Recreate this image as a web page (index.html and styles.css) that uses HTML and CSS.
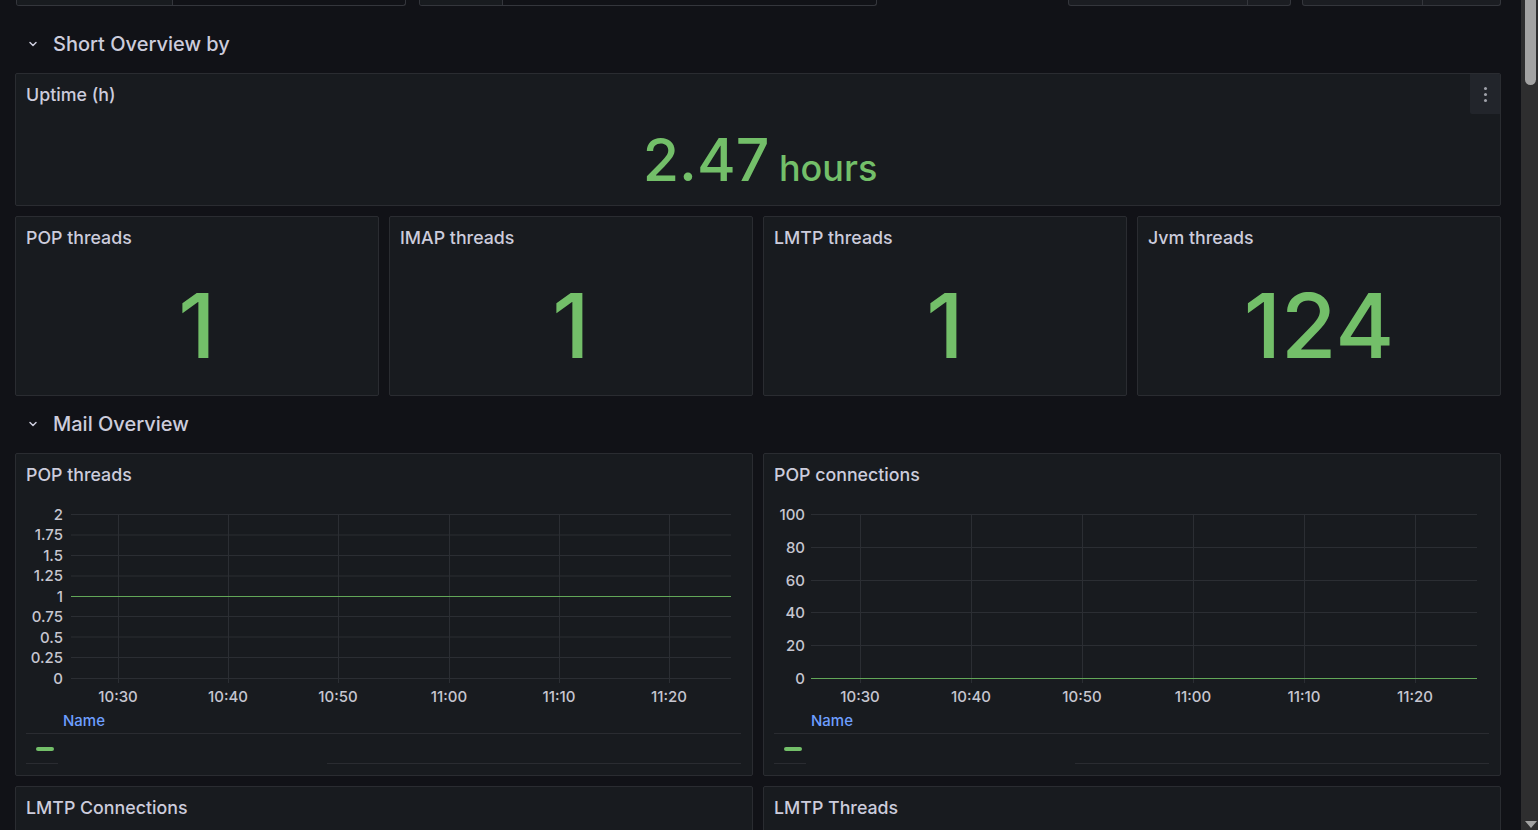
FILE: index.html
```html
<!DOCTYPE html>
<html lang="en">
<head>
<meta charset="utf-8">
<title>Dashboard</title>
<link rel="stylesheet" href="styles.css">
</head>
<body>
<div class="app">
  <main class="dash">
    <div class="toolbar">
      <div class="ctl c1"><span class="seg s1"></span><span class="seg"></span></div>
      <div class="ctl c2"><span class="seg s2"></span><span class="seg"></span></div>
      <div class="ctl c3"><span class="seg s3"></span><span class="seg"></span></div>
      <div class="ctl c4"><span class="seg s4"></span><span class="seg"></span></div>
    </div>

    <div class="row-head first">
      <svg class="chev" width="10" height="10" viewBox="0 0 10 10"><polyline points="2,3.5 5,6.5 8,3.5" fill="none" stroke="#ccccdc" stroke-width="1.5" stroke-linecap="round" stroke-linejoin="round"/></svg>
      <span class="row-title">Short Overview by</span>
    </div>

    <section class="panel uptime">
      <header class="ph">
        <h2 class="pt">Uptime (h)</h2>
        <button class="menu" aria-label="Menu"><i></i><i></i><i></i></button>
      </header>
      <div class="stat-body"><div class="val small">2.47<span class="unit"> hours</span></div></div>
    </section>

    <div class="stats">
      <section class="panel stat">
        <header class="ph"><h2 class="pt">POP threads</h2></header>
        <div class="stat-body"><div class="val big">1</div></div>
      </section>
      <section class="panel stat">
        <header class="ph"><h2 class="pt">IMAP threads</h2></header>
        <div class="stat-body"><div class="val big">1</div></div>
      </section>
      <section class="panel stat">
        <header class="ph"><h2 class="pt">LMTP threads</h2></header>
        <div class="stat-body"><div class="val big">1</div></div>
      </section>
      <section class="panel stat">
        <header class="ph"><h2 class="pt">Jvm threads</h2></header>
        <div class="stat-body"><div class="val big">124</div></div>
      </section>
    </div>

    <div class="row-head">
      <svg class="chev" width="10" height="10" viewBox="0 0 10 10"><polyline points="2,3.5 5,6.5 8,3.5" fill="none" stroke="#ccccdc" stroke-width="1.5" stroke-linecap="round" stroke-linejoin="round"/></svg>
      <span class="row-title">Mail Overview</span>
    </div>

    <div class="charts">
      <section class="panel chart">
        <header class="ph"><h2 class="pt">POP threads</h2></header>
        <svg class="plot" width="736" height="214" viewBox="0 0 736 214">
          <g class="grid-h">
            <line x1="55" x2="715" y1="20.5" y2="20.5"/>
            <line x1="55" x2="715" y1="41" y2="41"/>
            <line x1="55" x2="715" y1="61.5" y2="61.5"/>
            <line x1="55" x2="715" y1="82" y2="82"/>
            <line x1="55" x2="715" y1="122.5" y2="122.5"/>
            <line x1="55" x2="715" y1="143" y2="143"/>
            <line x1="55" x2="715" y1="163.5" y2="163.5"/>
            <line x1="55" x2="715" y1="184.5" y2="184.5"/>
          </g>
          <g class="grid-v">
            <line x1="102.5" x2="102.5" y1="20" y2="189"/>
            <line x1="212.5" x2="212.5" y1="20" y2="189"/>
            <line x1="322.5" x2="322.5" y1="20" y2="189"/>
            <line x1="433.5" x2="433.5" y1="20" y2="189"/>
            <line x1="543.5" x2="543.5" y1="20" y2="189"/>
            <line x1="653.5" x2="653.5" y1="20" y2="189"/>
          </g>
          <line class="series" x1="55" x2="715" y1="102.5" y2="102.5" stroke="#62a758" stroke-width="1"/>
          <g class="ylab">
            <text x="47" y="20">2</text>
            <text x="47" y="40.5">1.75</text>
            <text x="47" y="61">1.5</text>
            <text x="47" y="81.5">1.25</text>
            <text x="47" y="102">1</text>
            <text x="47" y="122.5">0.75</text>
            <text x="47" y="143">0.5</text>
            <text x="47" y="163.5">0.25</text>
            <text x="47" y="184">0</text>
          </g>
          <g class="xlab">
            <text x="102" y="202">10:30</text>
            <text x="212" y="202">10:40</text>
            <text x="322" y="202">10:50</text>
            <text x="433" y="202">11:00</text>
            <text x="543" y="202">11:10</text>
            <text x="653" y="202">11:20</text>
          </g>
        </svg>
        <div class="legend">
          <div class="lg-head">Name</div>
          <div class="lg-row"><span class="dash-mark"></span></div>
        </div>
      </section>

      <section class="panel chart">
        <header class="ph"><h2 class="pt">POP connections</h2></header>
        <svg class="plot" width="736" height="214" viewBox="0 0 736 214">
          <g class="grid-h">
            <line x1="47" x2="713" y1="20.5" y2="20.5"/>
            <line x1="47" x2="713" y1="53.5" y2="53.5"/>
            <line x1="47" x2="713" y1="86.5" y2="86.5"/>
            <line x1="47" x2="713" y1="118.5" y2="118.5"/>
            <line x1="47" x2="713" y1="151.5" y2="151.5"/>
          </g>
          <g class="grid-v">
            <line x1="96.5" x2="96.5" y1="20" y2="189"/>
            <line x1="207.5" x2="207.5" y1="20" y2="189"/>
            <line x1="318.5" x2="318.5" y1="20" y2="189"/>
            <line x1="429.5" x2="429.5" y1="20" y2="189"/>
            <line x1="540.5" x2="540.5" y1="20" y2="189"/>
            <line x1="651.5" x2="651.5" y1="20" y2="189"/>
          </g>
          <line class="series" x1="47" x2="713" y1="184.5" y2="184.5" stroke="#62a758" stroke-width="1"/>
          <g class="ylab">
            <text x="41" y="20">100</text>
            <text x="41" y="53">80</text>
            <text x="41" y="86">60</text>
            <text x="41" y="118">40</text>
            <text x="41" y="151">20</text>
            <text x="41" y="184">0</text>
          </g>
          <g class="xlab">
            <text x="96" y="202">10:30</text>
            <text x="207" y="202">10:40</text>
            <text x="318" y="202">10:50</text>
            <text x="429" y="202">11:00</text>
            <text x="540" y="202">11:10</text>
            <text x="651" y="202">11:20</text>
          </g>
        </svg>
        <div class="legend">
          <div class="lg-head">Name</div>
          <div class="lg-row"><span class="dash-mark"></span></div>
        </div>
      </section>

      <section class="panel chart">
        <header class="ph"><h2 class="pt">LMTP Connections</h2></header>
      </section>
      <section class="panel chart">
        <header class="ph"><h2 class="pt">LMTP Threads</h2></header>
      </section>
    </div>
  </main>

  <div class="scrollbar">
    <div class="thumb"></div>
    <div class="arrow"></div>
  </div>
</div>
</body>
</html>
```

FILE: styles.css
```css
* { box-sizing: border-box; }

html, body {
  margin: 0;
  height: 100%;
  overflow: hidden;
  background: #111217;
  color: #ccccdc;
  font-family: "Inter", "Noto Sans", sans-serif;
}

.app {
  display: flex;
  height: 830px;
}

.dash {
  flex: 1;
  padding: 0 20px 0 15px;
  overflow: hidden;
}

/* top toolbar (scrolled off, only bottom edge visible) */
.toolbar {
  display: flex;
  height: 6px;
}
.ctl {
  display: flex;
  height: 6px;
  border: 1px solid #34363c;
  border-top: none;
  border-radius: 0 0 3px 3px;
  overflow: hidden;
}
.seg { flex: 1; }
.seg + .seg { border-left: 1px solid #34363c; }
.s1, .s2 { flex: none; background: #181b1f; }
.c1 { margin-left: 1px; width: 390px; }
.s1 { width: 155px; }
.c2 { margin-left: 13px; width: 458px; }
.s2 { width: 82px; }
.c3 { margin-left: auto; width: 223px; background: #1b1d22; }
.s3 { flex: none; width: 178px; }
.c4 { margin-left: 11px; width: 199px; background: #1b1d22; }
.s4 { flex: none; width: 119px; }

/* row header */
.row-head {
  display: flex;
  align-items: center;
  height: 38px;
  margin: 9px 0 10px;
  padding-left: 13px;
}
.row-head.first { margin-top: 19px; }
.chev { flex: none; display: block; }
.row-title {
  margin-left: 15px;
  font-size: 20px;
  font-weight: 500;
  color: #ccccdc;
}

/* panels */
.panel {
  background: #181b1f;
  border: 1px solid #2a2c31;
  border-radius: 2px;
  display: flex;
  flex-direction: column;
  overflow: hidden;
}
.ph {
  display: flex;
  align-items: center;
  justify-content: space-between;
  height: 40px;
  flex: none;
  padding-left: 10px;
}
.pt {
  margin: 0;
  font-size: 17.8px;
  font-weight: 500;
  color: #ccccdc;
  white-space: nowrap;
}
.menu {
  width: 30px;
  height: 40px;
  border: none;
  padding: 0;
  background: #22252b;
  border-radius: 0 0 0 2px;
  display: flex;
  flex-direction: column;
  align-items: center;
  justify-content: center;
  gap: 3px;
}
.menu i {
  display: block;
  width: 3px;
  height: 3px;
  border-radius: 50%;
  background: #a0a2aa;
}

.uptime { height: 133px; }
.stats {
  display: grid;
  grid-template-columns: repeat(4, 1fr);
  gap: 10px;
  margin-top: 10px;
}
.stat { height: 180px; }

.stat-body {
  flex: 1;
  display: flex;
  align-items: center;
  justify-content: center;
}
.val {
  color: #73bf69;
  font-weight: 500;
  line-height: 1;
  white-space: nowrap;
}
.val.small { font-size: 59px; padding-left: 4px; }
.val.big { font-size: 90px; }
.unit { font-size: 36px; }

/* charts */
.charts {
  display: grid;
  grid-template-columns: 1fr 1fr;
  gap: 10px;
}
.chart { height: 323px; }
.plot { display: block; flex: none; }
.grid-h line, .grid-v line {
  stroke: #2b2e33;
  stroke-width: 1;
}
.ylab text, .xlab text {
  font-family: "Inter", "Noto Sans", sans-serif;
  font-size: 15px;
  font-weight: 500;
  fill: #c6c6d0;
  dominant-baseline: central;
}
.ylab text { text-anchor: end; }
.xlab text { text-anchor: middle; }

.legend {
  margin: 0 11px 0 10px;
}
.lg-head {
  height: 26px;
  padding: 0 0 0 37px;
  display: flex;
  align-items: center;
  font-size: 15px;
  font-weight: 500;
  color: #6e9fff;
  border-bottom: 1px solid #2a2c31;
}
.lg-row {
  height: 30px;
  display: flex;
  align-items: center;
  padding-left: 10px;
  background: linear-gradient(to right, #2a2c31 0 32px, transparent 32px 301px, #2a2c31 301px) bottom / 100% 1px no-repeat;
  padding-bottom: 1px;
}
.dash-mark {
  display: block;
  width: 18px;
  height: 4px;
  border-radius: 3px;
  background: #73bf69;
}

/* fake scrollbar */
.scrollbar {
  width: 17px;
  flex: none;
  background: #2e2e2f;
  position: relative;
}
.thumb {
  margin-left: 4px;
  width: 11px;
  height: 85px;
  background: #a3a3a3;
  border-radius: 0 0 6px 6px;
}
.arrow {
  position: absolute;
  left: 4px;
  bottom: 2px;
  width: 0;
  height: 0;
  border-left: 6px solid transparent;
  border-right: 6px solid transparent;
  border-top: 7px solid #a3a3a3;
}
```
